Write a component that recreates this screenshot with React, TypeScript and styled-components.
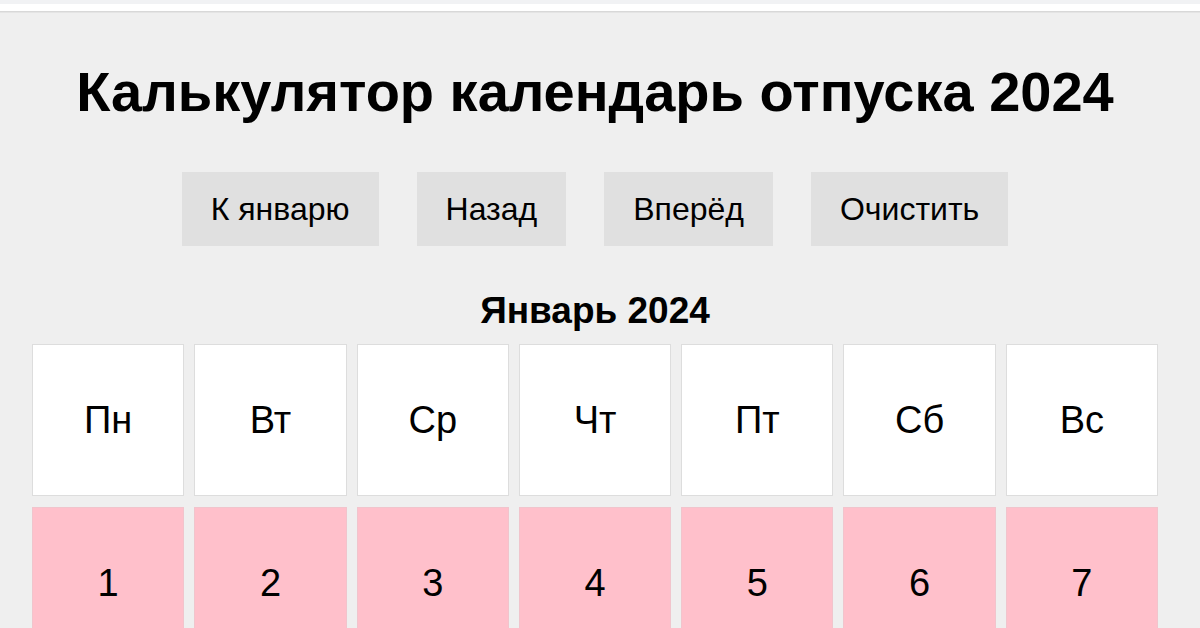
import React from "react";
import styled, { createGlobalStyle } from "styled-components";

const Global = createGlobalStyle`
  html, body { margin: 0; padding: 0; }
  body {
    background: #efefef;
    font-family: "Liberation Sans", Arial, sans-serif;
    color: #000;
    overflow: hidden;
  }
`;

const TopStrip = styled.div`
  height: 4px;
  background: #f1f2f4;
`;

const TopBar = styled.div`
  height: 7px;
  background: #ffffff;
  border-bottom: 1px solid #d8d8d8;
  box-shadow: 0 1px 0 #e4e4e4;
`;

const Page = styled.main`
  display: flex;
  flex-direction: column;
  align-items: center;
  width: 1190px;
`;

const Title = styled.h1`
  margin: 48px 0 0;
  font-size: 56px;
  line-height: 64px;
  font-weight: bold;
`;

const Toolbar = styled.div`
  display: flex;
  gap: 38px;
  margin-top: 48px;
`;

const Button = styled.button`
  height: 74px;
  padding: 0 29px;
  border: none;
  background: #e0e0e0;
  font-family: inherit;
  font-size: 32px;
  color: #000;
  cursor: pointer;
`;

const MonthTitle = styled.h2`
  margin: 43px 0 0;
  font-size: 37px;
  line-height: 44px;
  font-weight: bold;
`;

const Grid = styled.div`
  display: grid;
  grid-template-columns: repeat(7, 1fr);
  column-gap: 10px;
  row-gap: 11px;
  width: 1126px;
  margin-top: 11px;
`;

const Cell = styled.div<{ $variant: "head" | "day" }>`
  aspect-ratio: 1 / 1;
  box-sizing: border-box;
  border: 1px solid ${(p) => (p.$variant === "head" ? "#dddddd" : "#f1c4cc")};
  background: ${(p) => (p.$variant === "head" ? "#ffffff" : "#ffc0cb")};
  display: flex;
  align-items: center;
  justify-content: center;
  font-size: 38px;
`;

const weekdays = ["Пн", "Вт", "Ср", "Чт", "Пт", "Сб", "Вс"];
const days = Array.from({ length: 7 }, (_, i) => i + 1);

export default function App() {
  return (
    <>
      <Global />
      <TopStrip />
      <TopBar />
      <Page>
        <Title>Калькулятор календарь отпуска 2024</Title>
        <Toolbar>
          <Button>К январю</Button>
          <Button>Назад</Button>
          <Button>Вперёд</Button>
          <Button>Очистить</Button>
        </Toolbar>
        <MonthTitle>Январь 2024</MonthTitle>
        <Grid>
          {weekdays.map((d) => (
            <Cell key={d} $variant="head">{d}</Cell>
          ))}
          {days.map((d) => (
            <Cell key={d} $variant="day">{d}</Cell>
          ))}
        </Grid>
      </Page>
    </>
  );
}
